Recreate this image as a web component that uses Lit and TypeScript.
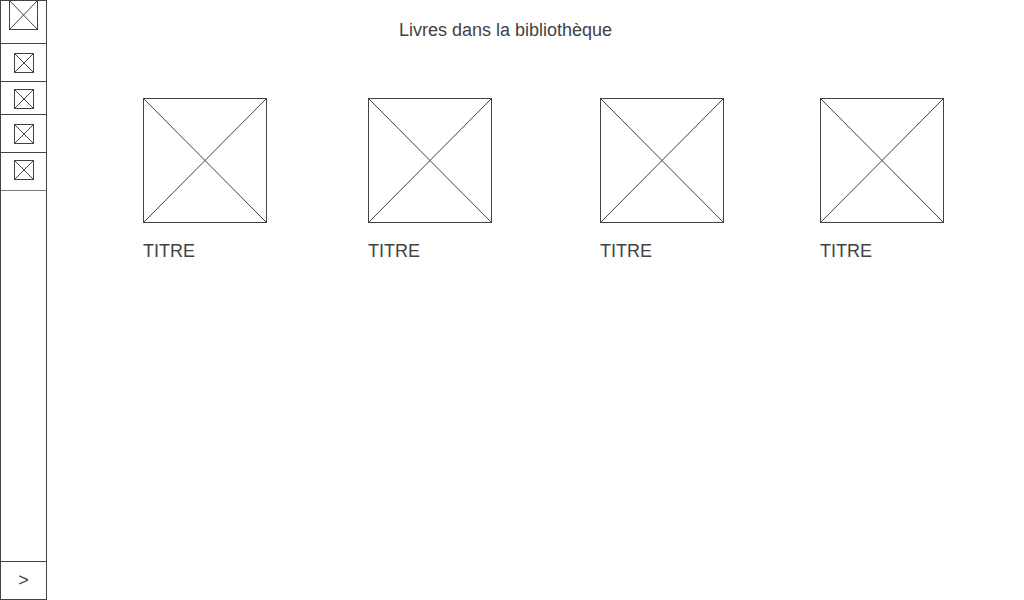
import { LitElement, html, css } from "lit";
import { customElement, property } from "lit/decorators.js";

@customElement("image-placeholder")
class ImagePlaceholder extends LitElement {
  @property() label = "";

  static styles = css`
    :host {
      display: block;
      box-sizing: border-box;
      border: 1px solid #424242;
    }
    .cross {
      display: block;
      width: 100%;
      height: 100%;
      stroke: #424242;
      stroke-width: 1;
    }
  `;

  render() {
    return html`<svg class="cross" role="img" aria-label=${this.label}>
      <line x1="0" y1="0" x2="100%" y2="100%" />
      <line x1="100%" y1="0" x2="0" y2="100%" />
    </svg>`;
  }
}

@customElement("side-bar")
class SideBar extends LitElement {
  static styles = css`
    :host {
      display: flex;
      flex-direction: column;
      box-sizing: border-box;
      width: 47px;
      border: 1px solid #424242;
    }
    .menu {
      display: flex;
      flex-direction: column;
    }
    .item {
      display: flex;
      justify-content: center;
      align-items: flex-start;
      box-sizing: border-box;
      width: 100%;
      height: 38px;
      margin: 0;
      padding: 9px 12px 0 13px;
      border: 0;
      border-bottom: 1px solid #424242;
      background: none;
      color: #424242;
      font: 18px/20px "Liberation Sans", Arial, sans-serif;
      cursor: pointer;
    }
    .brand {
      height: 43px;
      padding: 0;
    }
    .short {
      height: 33px;
      padding-top: 7px;
    }
    .last {
      padding-top: 7px;
      border-bottom-color: #777777;
    }
    .icon {
      width: 20px;
      height: 20px;
    }
    .logo {
      width: 29px;
      height: 30px;
      margin-top: -1px;
    }
    .expand {
      margin-top: auto;
      padding: 8px 0 0;
      border-top: 1px solid #424242;
      border-bottom: 0;
    }
  `;

  render() {
    return html`
      <nav class="menu">
        <button class="item brand">
          <image-placeholder class="logo" label="Logo"></image-placeholder>
        </button>
        ${["", "short", "", "last"].map(
          (kind, i) => html`<button class="item ${kind}">
            <image-placeholder class="icon" label="Menu ${i + 1}"></image-placeholder>
          </button>`
        )}
      </nav>
      <button class="item expand">&gt;</button>
    `;
  }
}

@customElement("app-root")
class AppRoot extends LitElement {
  static styles = css`
    :host {
      display: flex;
      min-height: 100vh;
      background: #ffffff;
      color: #424242;
      font: 18px/20px "Liberation Sans", Arial, sans-serif;
    }
    .bar {
      flex: none;
    }
    .content {
      flex: 1;
      min-width: 0;
      padding: 20px 80px 20px 96px;
    }
    .heading {
      margin: 0 0 58px;
      padding-right: 76px;
      font-size: 18px;
      font-weight: 400;
      text-align: center;
    }
    .books {
      display: grid;
      grid-template-columns: 225fr 232fr 220fr 124px;
      margin: 0;
      padding: 0;
      list-style: none;
    }
    .cover {
      width: 124px;
      height: 125px;
    }
    .title {
      margin: 18px 0 0;
      font-size: 18px;
      font-weight: 400;
    }
  `;

  private books = ["TITRE", "TITRE", "TITRE", "TITRE"];

  render() {
    return html`
      <side-bar class="bar"></side-bar>
      <main class="content">
        <h1 class="heading">Livres dans la bibliothèque</h1>
        <ul class="books">
          ${this.books.map(
            (title) => html`<li>
              <image-placeholder class="cover" label="Couverture"></image-placeholder>
              <h2 class="title">${title}</h2>
            </li>`
          )}
        </ul>
      </main>
    `;
  }
}
